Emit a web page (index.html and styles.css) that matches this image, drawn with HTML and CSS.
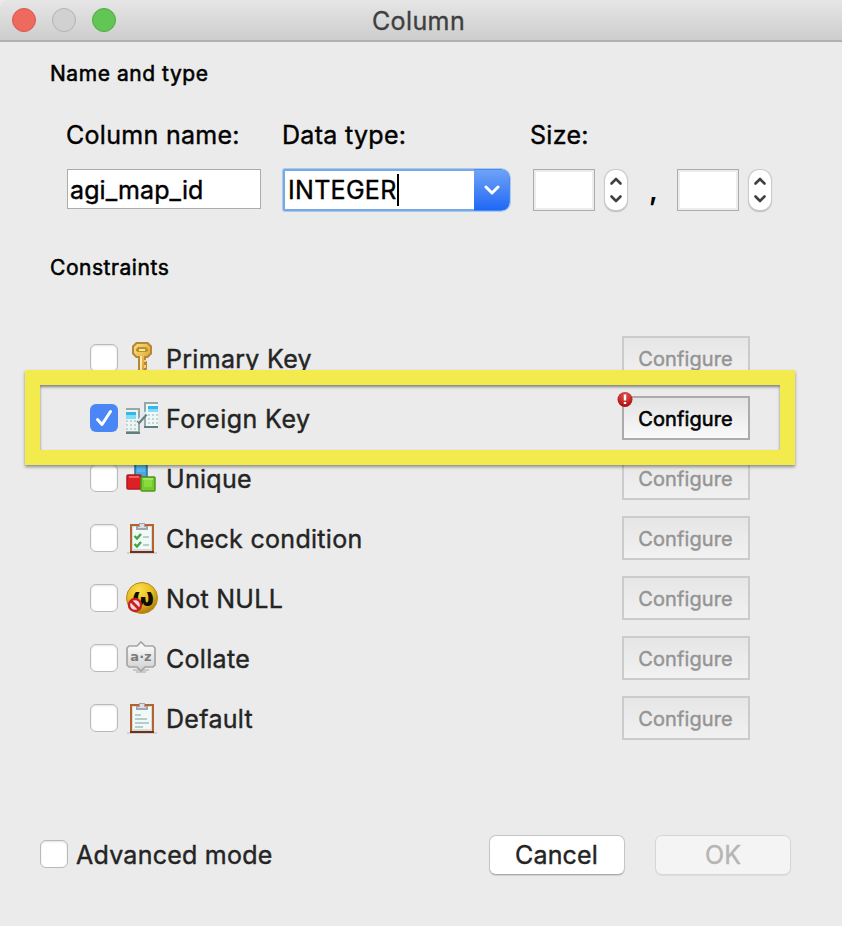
FILE: index.html
```html
<!DOCTYPE html>
<html lang="en">
<head>
<meta charset="utf-8">
<title>Column</title>
<link rel="stylesheet" href="styles.css">
</head>
<body>
<svg class="defs" width="0" height="0" aria-hidden="true">
  <defs>
    <linearGradient id="gold" x1="0" y1="0" x2="1" y2="1"><stop offset="0" stop-color="#f7dc8c"/><stop offset=".5" stop-color="#e8bd50"/><stop offset="1" stop-color="#c48a2c"/></linearGradient>
    <radialGradient id="coin" cx=".4" cy=".25" r=".8"><stop offset="0" stop-color="#fbe04a"/><stop offset=".55" stop-color="#e6ba20"/><stop offset="1" stop-color="#a8730c"/></radialGradient>
    <linearGradient id="bubble" x1="0" y1="0" x2="0" y2="1"><stop offset="0" stop-color="#fff"/><stop offset="1" stop-color="#cfcfcf"/></linearGradient>
    <radialGradient id="alert" cx=".5" cy=".25" r=".75"><stop offset="0" stop-color="#e2564e"/><stop offset="1" stop-color="#a80d0d"/></radialGradient>
    <g id="board">
      <path d="M1 31h30" stroke="#d3cfcf" stroke-width="2"/>
      <rect x="4" y="2" width="24" height="29" fill="#6f2f1c"/>
      <rect x="4" y="2" width="24" height="27" fill="#b5622d"/>
      <rect x="6" y="4" width="20" height="25" fill="#d2dedd"/>
      <rect x="7" y="5" width="18" height="22" fill="#f1f8f8"/>
      <path d="M10 8V4h3V1h6v3h3v4z" fill="#a5a4ae"/>
      <path d="M12 6V5h2V2h4v3h2v1z" fill="#dddde5"/>
    </g>
  </defs>
</svg>
<div class="window">
  <header class="titlebar">
    <div class="lights"><i class="light close"></i><i class="light minimize"></i><i class="light zoom"></i></div>
    <h1 class="title"><span>Column</span></h1>
  </header>

  <main class="content">
    <h2 class="heading name-heading"><span>Name and type</span></h2>
    <div class="fields">
      <div class="field name-field">
        <label class="label">Column name:</label>
        <div class="input"><span>agi_map_id</span></div>
      </div>
      <div class="field type-field">
        <label class="label">Data type:</label>
        <div class="combo">
          <div class="combo-text"><span>INTEGER</span><i class="caret"></i></div>
          <div class="combo-arrow"><svg width="16" height="10" viewBox="0 0 16 10"><path d="M2 2l6 6 6-6"/></svg></div>
        </div>
      </div>
      <div class="field">
        <label class="label">Size:</label>
        <div class="sizes">
          <div class="size-box"></div>
          <div class="stepper"><svg width="22" height="40" viewBox="0 0 22 40"><path d="M6.500 13.500L11 9l4.500 4.500M6.500 26.500L11 31l4.500-4.500"/></svg></div>
          <span class="comma">,</span>
          <div class="size-box"></div>
          <div class="stepper"><svg width="22" height="40" viewBox="0 0 22 40"><path d="M6.500 13.500L11 9l4.500 4.500M6.500 26.500L11 31l4.500-4.500"/></svg></div>
        </div>
      </div>
    </div>

    <h2 class="heading constraints-heading"><span>Constraints</span></h2>
    <div class="constraints">
      <div class="row">
        <i class="check"></i>
        <svg class="icon" viewBox="0 0 32 32">
          <path d="M10 0h12l4 4v8l-4 4h-2v3h1v8l-3 5h-4l-2-2V16h-2l-4-4V4z" fill="#b98638"/>
          <path d="M11 2h10l3 3v6l-3 3h-3v15h-4V14h-3l-3-3V5z" fill="url(#gold)"/>
          <path d="M12 5h8l2 2v2l-2 1h-8l-2-1V7z" fill="#b99323"/><path d="M13 7h6v2h-6z" fill="#f3e6a3"/>
          <path d="M15 14v15" stroke="#fae7aa" stroke-width="2"/><path d="M18 18h2v2h-2zM18 23h2v3h-2z" fill="#f1cf72"/>
        </svg>
        <span class="name">Primary Key</span><span class="config"><span>Configure</span></span>
      </div>
      <div class="row">
        <i class="check on"><svg viewBox="0 0 28 28"><path d="M7.500 15.500l4.500 5L20.500 7.500"/></svg></i>
        <svg class="icon" viewBox="0 0 32 32">
          <path d="M0 6h14v25H0z" fill="#94a9a9"/><path d="M0 8h12v21H0z" fill="#edf5f4"/>
          <path d="M0 10h10v4H0z" fill="#35b7ed"/><path d="M0 13h10v4H0z" fill="#83dcf8"/><path d="M0 18h2v2H0zM4 18h2v2H4zM8 18h2v2H8zM0 22h2v2H0zM4 22h2v2H4zM8 22h2v2H8zM0 26h2v2H0zM4 26h2v2H4zM8 26h2v2H8z" fill="#c2d5d5"/>
          <path d="M0 31h14" stroke="#627d7d" stroke-width="2"/>
          <path d="M18 0h14v26H18z" fill="#94a9a9"/><path d="M20 2h12v22H20z" fill="#f0f7f7"/>
          <path d="M22 4h10v3H22z" fill="#35b7ed"/><path d="M22 7h10v3H22z" fill="#83dcf8"/><path d="M22 12h2v2h-2zM26 12h2v2h-2zM30 12h2v2h-2zM22 16h2v2h-2zM26 16h2v2h-2zM30 16h2v2h-2zM22 20h2v2h-2zM26 20h2v2h-2zM30 20h2v2h-2z" fill="#c2d5d5"/>
          <path d="M18 25h14" stroke="#627d7d" stroke-width="2"/>
          <path d="M12 21l8-9" stroke="#657e7e" stroke-width="4"/><path d="M12 19l8-9" stroke="#e1eeee" stroke-width="2"/>
        </svg>
        <span class="name foreign">Foreign Key</span><span class="config active"><span>Configure</span>
          <svg class="alert" width="16" height="17" viewBox="0 0 16 17"><circle cx="8" cy="8.500" r="7.500" fill="url(#alert)"/><path d="M8 3.500v6M8 11v2" stroke="#fff" stroke-width="2.400"/></svg></span>
      </div>
      <div class="row">
        <i class="check"></i>
        <svg class="icon" viewBox="0 0 32 32">
          <rect x="9" y="0" width="12" height="15" fill="#48a8df" stroke="#276f9e" stroke-width="1.500"/><path d="M11 2h8v8h-8z" fill="#59b7e9"/>
          <rect x="1" y="13" width="14" height="14" rx="1" fill="#dc2026" stroke="#b01a22" stroke-width="1.500"/><path d="M3 15h10" stroke="#f2605e" stroke-width="2"/>
          <rect x="15" y="15" width="14" height="14" rx="1" fill="#78c92d" stroke="#4d991f" stroke-width="1.500"/><path d="M18 18h8v7h-8z" fill="#8bda3c"/><path d="M17 17h10" stroke="#a8e45f" stroke-width="2"/>
        </svg>
        <span class="name">Unique</span><span class="config"><span>Configure</span></span>
      </div>
      <div class="row">
        <i class="check"></i>
        <svg class="icon" viewBox="0 0 32 32"><use href="#board"/><path d="M8.500 14l2.500 2.500L15 12M8.500 22l2.500 2.500L15 20" fill="none" stroke="#3da83c" stroke-width="2.400"/><path d="M17 15h6M17 23h6" stroke="#b8cfcd" stroke-width="2"/></svg>
        <span class="name">Check condition</span><span class="config"><span>Configure</span></span>
      </div>
      <div class="row">
        <i class="check"></i>
        <svg class="icon" viewBox="0 0 32 32">
          <circle cx="16" cy="16" r="15.500" fill="url(#coin)" stroke="#b88a19"/>
          <text x="17" y="24" class="omega">ω</text>
          <circle cx="9" cy="23" r="6" fill="#f6dada" stroke="#c51f24" stroke-width="2.400"/><path d="M5 19l8 8" stroke="#c51f24" stroke-width="2.800"/>
        </svg>
        <span class="name">Not NULL</span><span class="config"><span>Configure</span></span>
      </div>
      <div class="row">
        <i class="check"></i>
        <svg class="icon" viewBox="0 0 32 32">
          <path d="M7 28h16M10 30h10" stroke="#c9c9c9" stroke-width="2"/>
          <path d="M3 4h8l4-4 4 4h8l2 2v17l-2 2h-8l-4 4-4-4H3l-2-2V6z" fill="url(#bubble)" stroke="#a5a5a5" stroke-width="1.700"/>
          <text x="15" y="19" class="az">a·z</text>
        </svg>
        <span class="name">Collate</span><span class="config"><span>Configure</span></span>
      </div>
      <div class="row">
        <i class="check"></i>
        <svg class="icon" viewBox="0 0 32 32"><use href="#board"/><path d="M9 13h6M9 17h12M9 21h14M9 25h8" stroke="#b5cccb" stroke-width="2"/></svg>
        <span class="name">Default</span><span class="config"><span>Configure</span></span>
      </div>
      <div class="highlight"></div>
    </div>
  </main>

  <footer class="footer">
    <i class="check"></i><span class="advanced">Advanced mode</span>
    <button class="btn cancel"><span>Cancel</span></button>
    <button class="btn ok" disabled><span>OK</span></button>
  </footer>
</div>
</body>
</html>
```
FILE: styles.css
```css
* { box-sizing: border-box; }
body { margin: 0; font-family: Inter, "Liberation Sans", sans-serif; color: #000; background: #ebebeb; }
.defs { position: absolute; }
.window { width: 842px; height: 926px; background: #ebebeb; display: flex; flex-direction: column; overflow: hidden; }
.titlebar { height: 42px; flex: none; display: grid; grid-template-columns: 200px 1fr 200px; align-items: center; background: linear-gradient(#e6e6e6, #cdcdcd); border-bottom: 2px solid #b1b1b1; border-radius: 8px 0 0; }
.lights { display: flex; gap: 16px; padding-left: 12px; }
.light { width: 24px; height: 24px; border-radius: 50%; border: 1px solid; }
.close { background: #ee6a5f; border-color: #d9564c; }
.minimize { background: #d1d1d1; border-color: #b3b3b3; }
.zoom { background: #62c655; border-color: #52a842; }
.title { margin: 0 0 0 -5px; padding-top: 2px; text-align: center; font-size: 25px; font-weight: 400; line-height: 30px; letter-spacing: .4px; color: #3f3f3f; -webkit-text-stroke: .35px; }
.content { flex: none; height: 770px; }
.heading { margin: 0; padding-left: 50px; font-size: 21px; line-height: 26px; font-weight: 400; letter-spacing: .55px; -webkit-text-stroke: .55px; }
.name-heading { padding-top: 19px; }
.fields { display: flex; padding: 31px 0 0 66px; }
.field { display: flex; flex-direction: column; }
.name-field { width: 216px; }
.type-field { width: 248px; }
.label { height: 34px; line-height: 34px; font-size: 25px; letter-spacing: .3px; white-space: nowrap; -webkit-text-stroke: .4px; }
.input { margin: 17px 0 0 1px; width: 194px; height: 40px; padding-left: 2px; background: #fff; border: 1px solid #acacac; font-size: 25px; line-height: 40px; letter-spacing: .1px; white-space: nowrap; -webkit-text-stroke: .4px; }
.combo { display: flex; margin: 17px 0 0 1px; width: 227px; height: 42px; border-radius: 2px 9px 9px 2px; box-shadow: 0 0 0 1px #a9c9ef; overflow: hidden; }
.combo-text { width: 191px; display: flex; align-items: center; border: 2px solid #78a8e6; border-right: 0; background: #fff; padding-left: 3px; font-size: 25px; letter-spacing: .3px; -webkit-text-stroke: .4px; }
.caret { width: 2px; height: 32px; background: #000; }
.combo-arrow { flex: 1; display: grid; place-items: center; background: linear-gradient(#6fa3f7, #2067f5); border: 1px solid #4a8bf1; border-left: 0; border-radius: 0 8px 8px 0; }
.combo-arrow path { fill: none; stroke: #fff; stroke-width: 3; stroke-linecap: round; stroke-linejoin: round; }
.sizes { display: flex; margin: 17px 0 0 3px; height: 42px; }
.size-box { width: 62px; height: 42px; background: #fff; border: 1px solid #acacac; box-shadow: inset 0 0 0 2px #ececec; }
.stepper { width: 22px; height: 40px; margin: 1px 0 0 10px; border-radius: 10px; background: #fff; box-shadow: 0 0 0 1px #cbcbcb, 0 1px 1px 1px #bdbdbd; }
.stepper svg { display: block; }
.stepper path { fill: none; stroke: #404040; stroke-width: 2.6; stroke-linecap: round; stroke-linejoin: round; }
.comma { width: 50px; text-align: center; font-size: 28px; line-height: 42px; padding-left: 3px; font-weight: 600; }
.constraints-heading { margin-top: 44px; }
.constraints { position: relative; margin-top: 47px; }
.row { height: 60px; display: flex; align-items: center; padding-left: 90px; }
.check { width: 28px; height: 28px; flex: none; border-radius: 6px; background: #fff; border: 1px solid #b9b9b9; box-shadow: inset 0 1px 2px #e3e3e3; }
.check.on { background: #4a86f5; border: 0; box-shadow: none; }
.check.on svg { display: block; }
.check.on path { fill: none; stroke: #fff; stroke-width: 3; stroke-linecap: round; stroke-linejoin: round; }
.icon { width: 32px; height: 32px; margin-left: 8px; flex: none; overflow: visible; }
.omega { font: 700 25px "DejaVu Sans"; text-anchor: middle; fill: #100d02; }
.az { font: 700 13px "DejaVu Sans"; text-anchor: middle; fill: #7b7b7b; }
.name { width: 456px; margin-left: 8px; padding-top: 2px; font-size: 25px; line-height: 32px; letter-spacing: .3px; color: #242424; -webkit-text-stroke: .4px; }
.name.foreign { letter-spacing: .45px; }
.config { position: relative; width: 128px; height: 44px; border: 2px solid #cbcbcb; background: linear-gradient(#e6e6e6, #f1f1f1); text-align: center; font-size: 20px; line-height: 43px; letter-spacing: .1px; color: #949494; -webkit-text-stroke: .4px; padding-right: 1px; }
.config.active { border-color: #ababab; background: linear-gradient(#e3e3e3, #f9f9f9); color: #000; -webkit-text-stroke-width: .6px; }
.alert { position: absolute; left: -7px; top: -7px; }
.highlight { position: absolute; left: 25px; top: 42px; width: 770px; height: 95px; border: 15px solid #f3ea4d; box-shadow: 0 2px 3px rgba(0,0,0,.4), inset 0 2px 3px rgba(0,0,0,.45); }
.footer { display: flex; align-items: center; height: 84px; padding-left: 40px; }
.advanced { width: 413px; margin-left: 8px; padding-top: 2px; font-size: 25px; letter-spacing: .25px; color: #242424; -webkit-text-stroke: .4px; }
.btn { width: 136px; height: 40px; margin-top: 1px; padding: 0; border: 1px solid #c6c6c6; border-bottom-color: #acacac; border-radius: 7px; background: #fff; box-shadow: 0 1px 1px #d0d0d0; font: 400 25px/38px Inter, sans-serif; letter-spacing: .15px; color: #242424; -webkit-text-stroke: .4px; }
.cancel { padding-right: 1px; }
.ok { margin-left: 30px; background: #f4f4f4; border-color: #d6d6d6; color: #b5b5b5; box-shadow: 0 1px 1px #dedede; }
```
